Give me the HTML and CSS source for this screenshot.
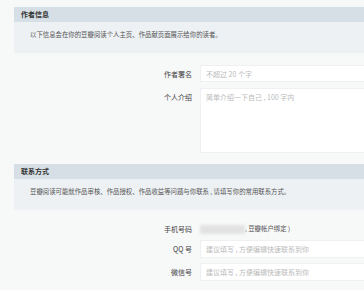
FILE: index.html
```html
<!DOCTYPE html>
<html lang="zh-CN">
  <head>
    <meta charset="UTF-8" />
    <meta name="viewport" content="width=device-width, initial-scale=1.0" />
    <title>个人资料</title>
    <link rel="stylesheet" href="styles.css">
  </head>
  <body>
    <div class="panel">
      <div class="panel-hd">作者信息</div>
      <div class="panel-bd">以下信息会在你的豆瓣阅读个人主页、作品献页面展示给你的读者。</div>
    </div>
    <div class="form form-author">
      <label class="form-label">作者署名</label>
      <input class="form-input" type="text" placeholder="不超过 20 个字" />
      <label class="form-label label-top">个人介绍</label>
      <textarea class="form-textarea" placeholder="简单介绍一下自己 , 100 字内"></textarea>
    </div>

    <div class="panel">
      <div class="panel-hd">联系方式</div>
      <div class="panel-bd">豆瓣阅读可能就作品审核、作品授权、作品收益等问题与你联系 , 请填写你的常用联系方式。</div>
    </div>
    <div class="form form-contact">
      <label class="form-label">手机号码</label>
      <div class="form-text"><span class="masked"></span>, 豆瓣帐户绑定 )</div>
      <label class="form-label">QQ 号</label>
      <input class="form-input" type="text" placeholder="建议填写 , 方便编辑快速联系到你" />
      <label class="form-label">微信号</label>
      <input class="form-input" type="text" placeholder="建议填写 , 方便编辑快速联系到你" />
    </div>
  </body>
</html>
```

FILE: styles.css
```css
html {
  overflow: hidden;
}
body {
  font-family: "Noto Sans CJK SC", "Noto Sans", sans-serif;
  font-size: 7px;
  color: #444;
  margin: 0;
  padding: 7px 0 0 14px;
  background-color: #f7f8f8;
}
* {
  box-sizing: border-box;
}
.panel {
  width: 400px;
}
.panel-hd {
  height: 15px;
  line-height: 15px;
  padding-left: 7px;
  background-color: #d5dfe5;
  font-weight: bold;
  color: #333;
}
.panel-bd {
  height: 31px;
  line-height: 10px;
  padding: 8px 0 0 16px;
  background-color: #edf1f4;
  color: #555;
  font-size: 6.4px;
}
.form {
  display: grid;
  grid-template-columns: 178px 400px;
  column-gap: 8px;
  row-gap: 6px;
  align-items: center;
}
.form-author {
  margin: 12px 0 11px;
}
.form-contact {
  margin-top: 13px;
  row-gap: 5px;
}
.form-label {
  text-align: right;
  color: #444;
}
.label-top {
  align-self: start;
  padding-top: 4px;
}
.form-input,
.form-textarea {
  font-family: inherit;
  font-size: 7px;
  margin: 0;
  padding: 0 5px;
  border: 1px solid #eef0f1;
  background: #fff;
  outline: none;
  color: #444;
}
.form-input {
  height: 18px;
}
.form-author .form-input {
  height: 17px;
}
.form-textarea {
  height: 65px;
  padding-top: 3px;
  resize: none;
}
.form-input::placeholder,
.form-textarea::placeholder {
  color: #bbb;
}
.form-text {
  height: 12px;
  line-height: 12px;
  display: flex;
  align-items: center;
  color: #555;
  font-size: 6.4px;
}
.masked {
  display: inline-block;
  width: 45px;
  height: 9px;
  background-color: #e2e2e2;
  filter: blur(1.5px);
}
```
